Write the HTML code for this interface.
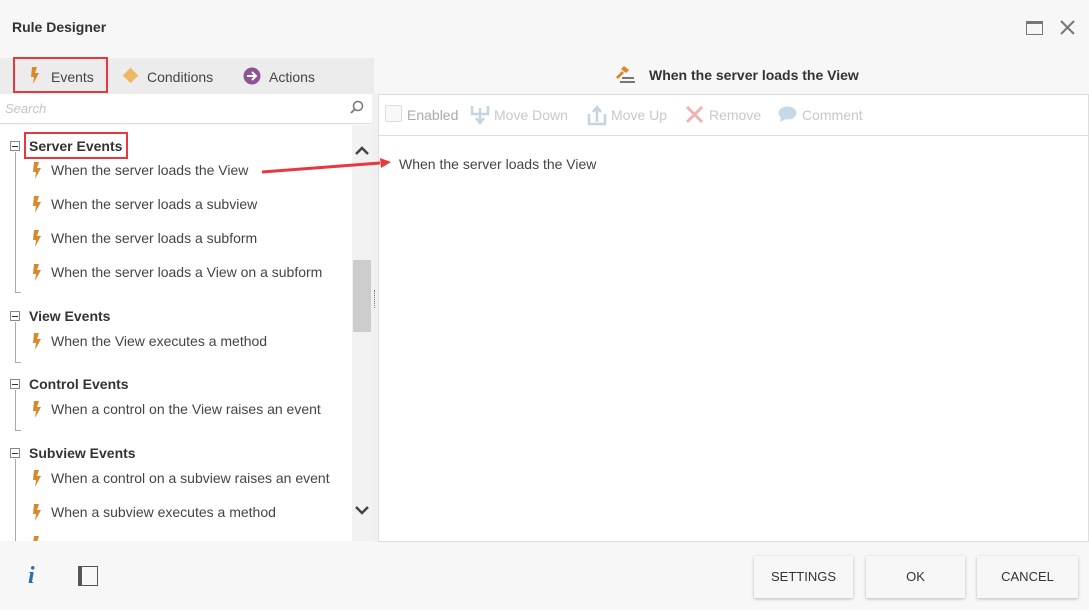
<!DOCTYPE html>
<html><head><style>
*{margin:0;padding:0;box-sizing:border-box}
body{width:1089px;height:610px;background:#f7f7f7;font-family:"Liberation Sans",sans-serif;color:#444;position:relative;overflow:hidden;font-size:14px}
.a{position:absolute}
.bolt{position:absolute;width:12px;height:17px}
.it{position:absolute;left:51px;font-size:14px;white-space:nowrap}
.hd{position:absolute;left:29px;font-size:14px;font-weight:bold;color:#333;white-space:nowrap}
.mb{position:absolute;left:10px;width:10px;height:10px;border:1px solid #888;background:#fff}
.mb:after{content:"";position:absolute;left:1px;top:3.5px;width:6px;height:1px;background:#333}
.vl{position:absolute;left:15px;width:6px;border-left:1px solid #aaa;border-bottom:1px solid #aaa}
.btn{position:absolute;top:556px;height:42px;background:#f7f7f7;box-shadow:0 1px 3px rgba(0,0,0,.25);font-size:13px;text-align:center;line-height:42px;color:#333}
.tb{position:absolute;top:107px;font-size:14px;color:#c8c8c8}
</style></head><body>
<div class="a" style="left:12px;top:19px;font-size:14px;font-weight:bold;color:#333">Rule Designer</div>
<div class="a" style="left:1026px;top:21px;width:17px;height:14px;border:1.5px solid #777;border-top-width:3px"></div>
<svg class="a" style="left:1059px;top:19px" width="17" height="17"><path d="M2 2L15 15M15 2L2 15" stroke="#777" stroke-width="2"/></svg>

<div class="a" style="left:0;top:58px;width:374px;height:36px;background:#ececec"></div>
<div class="a" style="left:13px;top:57px;width:95px;height:36px;border:2px solid #e8373d"></div>
<svg class="bolt" style="left:29px;top:67px" viewBox="0 0 12 17"><path d="M3 0h5l-2 6h4l-6 11 1-7H2z" fill="#d9892a"/></svg>
<div class="a" style="left:51px;top:69px;font-size:14px">Events</div>
<div class="a" style="left:125px;top:70px;width:11px;height:11px;background:#efb860;transform:rotate(45deg)"></div>
<div class="a" style="left:147px;top:69px">Conditions</div>
<svg class="a" style="left:243px;top:67px" width="18" height="18"><circle cx="9" cy="9" r="8.5" fill="#8c5591"/><path d="M4 9h8M9 5l4 4-4 4" stroke="#fff" stroke-width="2" fill="none"/></svg>
<div class="a" style="left:269px;top:69px">Actions</div>

<div class="a" style="left:0;top:94px;width:374px;height:30px;background:#fff;border-bottom:1px solid #ddd"></div>
<div class="a" style="left:5px;top:101px;font-size:13px;font-style:italic;color:#c4c4c4">Search</div>
<svg class="a" style="left:349px;top:100px" width="15" height="15"><circle cx="9" cy="6" r="4.5" stroke="#777" stroke-width="1.5" fill="none"/><path d="M6 9L2 13" stroke="#777" stroke-width="1.8"/></svg>

<div class="a" style="left:0;top:125px;width:352px;height:416px;background:#fff"></div>
<div class="a" style="left:352px;top:125px;width:20px;height:416px;background:#f2f2f2"></div>
<div class="a" style="left:353px;top:260px;width:18px;height:72px;background:#cdcdcd"></div>
<svg class="a" style="left:354px;top:144px" width="16" height="12"><path d="M2 10L8 4l6 6" stroke="#444" stroke-width="2.5" fill="none"/></svg>
<svg class="a" style="left:354px;top:505px" width="16" height="12"><path d="M2 2l6 6 6-6" stroke="#444" stroke-width="2.5" fill="none"/></svg>
<div class="a" style="left:372px;top:94px;width:6px;height:447px;background:#f0f0f0"></div>
<div class="a" style="left:374px;top:290px;width:1px;height:18px;border-left:1px dotted #777"></div>

<div class="vl" style="top:152px;height:141px"></div>
<div class="vl" style="top:322px;height:41px"></div>
<div class="vl" style="top:390px;height:41px"></div>
<div class="vl" style="top:459px;height:82px;border-bottom:none"></div>

<div class="mb" style="top:141px"></div><div class="hd" style="top:138px">Server Events</div>
<div class="a" style="left:24px;top:132px;width:104px;height:27px;border:2px solid #e8373d"></div>
<div class="mb" style="top:311px"></div><div class="hd" style="top:308px">View Events</div>
<div class="mb" style="top:379px"></div><div class="hd" style="top:376px">Control Events</div>
<div class="mb" style="top:448px"></div><div class="hd" style="top:445px">Subview Events</div>

<svg width="0" height="0" style="position:absolute"><defs><path id="b" d="M3 0h5l-2 6h4l-6 11 1-7H2z" fill="#d9892a"/></defs></svg>
<svg class="bolt" style="left:31px;top:162px" viewBox="0 0 12 17"><use href="#b"/></svg><div class="it" style="top:162px">When the server loads the View</div>
<svg class="bolt" style="left:31px;top:196px" viewBox="0 0 12 17"><use href="#b"/></svg><div class="it" style="top:196px">When the server loads a subview</div>
<svg class="bolt" style="left:31px;top:230px" viewBox="0 0 12 17"><use href="#b"/></svg><div class="it" style="top:230px">When the server loads a subform</div>
<svg class="bolt" style="left:31px;top:264px" viewBox="0 0 12 17"><use href="#b"/></svg><div class="it" style="top:264px">When the server loads a View on a subform</div>
<svg class="bolt" style="left:31px;top:333px" viewBox="0 0 12 17"><use href="#b"/></svg><div class="it" style="top:333px">When the View executes a method</div>
<svg class="bolt" style="left:31px;top:401px" viewBox="0 0 12 17"><use href="#b"/></svg><div class="it" style="top:401px">When a control on the View raises an event</div>
<svg class="bolt" style="left:31px;top:470px" viewBox="0 0 12 17"><use href="#b"/></svg><div class="it" style="top:470px">When a control on a subview raises an event</div>
<svg class="bolt" style="left:31px;top:504px" viewBox="0 0 12 17"><use href="#b"/></svg><div class="it" style="top:504px">When a subview executes a method</div>
<svg class="bolt" style="left:31px;top:536px;height:5px;overflow:hidden" viewBox="0 0 12 5"><use href="#b"/></svg>

<svg class="a" style="left:614px;top:64px" width="22" height="20"><path d="M10 2l5 4-3 3-5-4z" fill="#d9892a"/><path d="M8 7L2 13l2 2 6-6" fill="#d9892a"/><rect x="8" y="13" width="12" height="2" fill="#777"/><rect x="6" y="17" width="15" height="2" fill="#777"/></svg>
<div class="a" style="left:649px;top:67px;font-weight:bold;font-size:14px;color:#333">When the server loads the View</div>
<div class="a" style="left:378px;top:94px;width:711px;height:448px;background:#fff;border:1px solid #ddd"></div>
<div class="a" style="left:379px;top:135px;width:709px;height:1px;background:#ddd"></div>
<div class="a" style="left:385px;top:105px;width:17px;height:17px;border:1px solid #ddd;border-radius:2px;background:#f8f8f8"></div>
<div class="tb" style="left:407px;color:#aaa">Enabled</div>
<svg class="a" style="left:470px;top:104px" width="20" height="22"><path d="M2 2v8h16V2M10 4v14M6 14l4 5 4-5" stroke="#c6d3e0" stroke-width="2.5" fill="none"/></svg>
<div class="tb" style="left:494px">Move Down</div>
<svg class="a" style="left:587px;top:104px" width="20" height="22"><path d="M2 10v10h16V10M10 18V4M6 8l4-5 4 5" stroke="#c6d3e0" stroke-width="2.5" fill="none"/></svg>
<div class="tb" style="left:611px">Move Up</div>
<svg class="a" style="left:685px;top:105px" width="19" height="19"><path d="M2 2l15 15M17 2L2 17" stroke="#eeb3b3" stroke-width="3"/></svg>
<div class="tb" style="left:709px">Remove</div>
<svg class="a" style="left:778px;top:106px" width="19" height="17"><ellipse cx="9.5" cy="7" rx="9" ry="6.5" fill="#c6d9e6"/><path d="M3 11l-1 5 6-3z" fill="#c6d9e6"/></svg>
<div class="tb" style="left:802px">Comment</div>
<div class="a" style="left:399px;top:156px">When the server loads the View</div>
<svg class="a" style="left:262px;top:155px" width="130" height="20"><path d="M0 17L118 8" stroke="#e8373d" stroke-width="3"/><path d="M118 3l11 4-10 6z" fill="#e8373d"/></svg>

<div class="a" style="left:28px;top:563px;font-family:'Liberation Serif',serif;font-style:italic;font-weight:bold;font-size:24px;color:#2a6fa8">i</div>
<div class="a" style="left:78px;top:566px;width:20px;height:20px;border:1.5px solid #555;border-left-width:4px"></div>
<div class="btn" style="left:754px;width:99px">SETTINGS</div>
<div class="btn" style="left:866px;width:99px">OK</div>
<div class="btn" style="left:977px;width:101px">CANCEL</div>
</body></html>
